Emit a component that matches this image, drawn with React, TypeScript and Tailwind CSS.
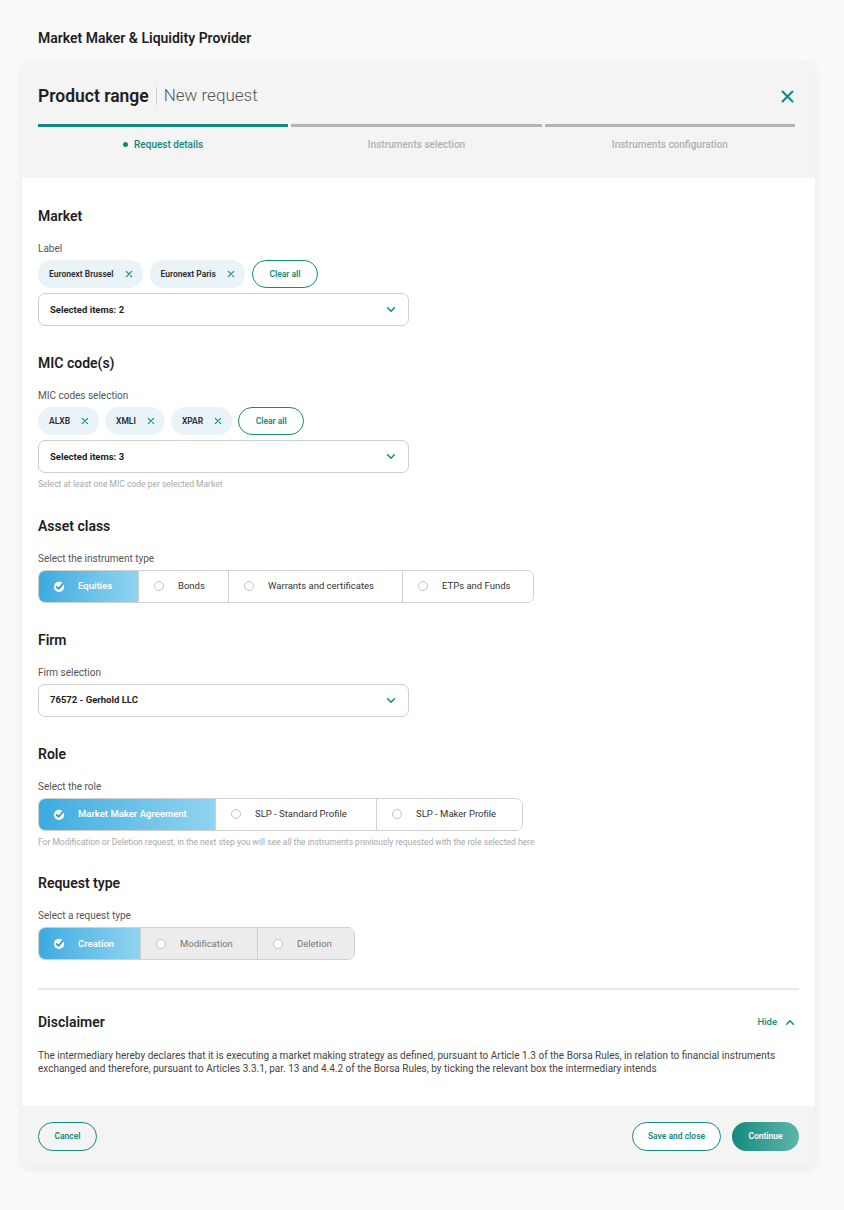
import type { ReactNode } from "react";

const TEAL = "text-[#0f8a7e]";

function XIcon({ className = "" }: { className?: string }) {
  return (
    <svg viewBox="0 0 12 12" className={className} fill="none" stroke="currentColor" strokeWidth="1.6" strokeLinecap="round">
      <path d="M2 2l8 8M10 2l-8 8" />
    </svg>
  );
}

function Chevron({ up = false }: { up?: boolean }) {
  return (
    <svg viewBox="0 0 12 8" className={`h-[7px] w-[10px] ${TEAL}`} fill="none" stroke="currentColor" strokeWidth="1.8" strokeLinecap="round" strokeLinejoin="round">
      <path d={up ? "M2 6l4-4 4 4" : "M2 2l4 4 4-4"} />
    </svg>
  );
}

function CheckBadge() {
  return (
    <svg viewBox="0 0 14 14" className="h-[13px] w-[13px]">
      <circle cx="6.5" cy="7.5" r="5.5" fill="white" />
      <path d="M3.8 7.4l2.1 2.1 4.6-5.4" fill="none" stroke="#2f9fd6" strokeWidth="1.9" strokeLinecap="round" strokeLinejoin="round" />
    </svg>
  );
}

function Radio() {
  return <span className="h-[10px] w-[10px] rounded-full border border-[#c4c4c4] bg-white" />;
}

function Section({ title, label, children, helper }: { title: string; label: string; children: ReactNode; helper?: string }) {
  return (
    <section className="flex flex-col">
      <h2 className="text-[14px] font-semibold leading-none text-[#1e1e24]">{title}</h2>
      <p className="mt-[21px] text-[10px] leading-none text-[#555]">{label}</p>
      <div className="mt-[6px] flex flex-col gap-[5px]">{children}</div>
      {helper && <p className="mt-[7px] text-[8.5px] leading-none text-[#a8a8a8]">{helper}</p>}
    </section>
  );
}

function Chip({ text }: { text: string }) {
  return (
    <span className="flex h-[28px] items-center gap-[11px] rounded-full bg-[#eaf3f8] pl-[11px] pr-[10px] text-[8.5px] font-semibold text-[#2a2a30]">
      {text}
      <XIcon className={`h-[8px] w-[8px] ${TEAL}`} />
    </span>
  );
}

function ClearAll() {
  return (
    <button className="flex h-[28px] w-[66px] items-center justify-center rounded-full border-[1.5px] border-[#138a7e] text-[8.5px] font-semibold text-[#138a7e]">
      Clear all
    </button>
  );
}

function Select({ value }: { value: string }) {
  return (
    <div className="flex h-[33px] w-[371px] items-center justify-between rounded-[7px] border border-[#cfcfcf] pl-[11px] pr-[12px]">
      <span className="text-[9.5px] font-bold text-[#1e1e24]">{value}</span>
      <Chevron />
    </div>
  );
}

function Segmented({ items, widths, disabled = false }: { items: string[]; widths: number[]; disabled?: boolean }) {
  return (
    <div className="flex h-[33px] w-fit overflow-hidden rounded-[7px] border border-[#d0d0d0]">
      {items.map((item, i) =>
        i === 0 ? (
          <div
            key={item}
            style={{ width: widths[i] }}
            className="flex items-center gap-[12px] bg-gradient-to-r from-[#3aabe0] to-[#8fd4f0] pl-[14px] text-[9.5px] font-semibold text-white"
          >
            <CheckBadge />
            {item}
          </div>
        ) : (
          <div
            key={item}
            style={{ width: widths[i] }}
            className={`flex items-center gap-[14px] border-l border-[#d0d0d0] pl-[15px] text-[9.5px] ${disabled ? "bg-[#ececec] text-[#777]" : "bg-white text-[#333]"}`}
          >
            <Radio />
            {item}
          </div>
        ),
      )}
    </div>
  );
}

export default function App() {
  return (
    <div className="min-h-[1210px] bg-[#fafafa] px-[22px] pt-[31px] text-[#1e1e24] [font-family:Roboto,'Noto_Sans',sans-serif]">
      <h1 className="pl-[16px] text-[14px] font-semibold leading-none">Market Maker &amp; Liquidity Provider</h1>

      <div className="mt-[17px] w-[793px] overflow-hidden rounded-[6px] bg-white shadow-[0_2px_8px_rgba(0,0,0,0.08)]">
        {/* header */}
        <div className="bg-[#f4f4f4] px-[16px] pb-[26px] pt-[21px]">
          <div className="flex items-center justify-between pr-[4px]">
            <div className="flex items-center">
              <span className="text-[17.5px] font-semibold">Product range</span>
              <span className="mx-[7px] h-[18px] w-px bg-[#cfcfcf]" />
              <span className="text-[17px] font-light text-[#555]">New request</span>
            </div>
            <XIcon className={`h-[15px] w-[15px] ${TEAL}`} />
          </div>
          <div className="mt-[15px] grid grid-cols-3 gap-[3px] pr-[4px]">
            {[
              ["Request details", true],
              ["Instruments selection", false],
              ["Instruments configuration", false],
            ].map(([label, active]) => (
              <div key={label as string} className="flex flex-col items-center">
                <div className={`h-[3px] w-full ${active ? "bg-[#0f8a7e]" : "bg-[#b5b5b5]"}`} />
                <div className={`mt-[10px] flex items-center gap-[6px] text-[10px] font-medium ${active ? "text-[#0f8a7e]" : "text-[#b0b0b0]"}`}>
                  {active && <span className="h-[5px] w-[5px] rounded-full bg-[#0f8a7e]" />}
                  {label as string}
                </div>
              </div>
            ))}
          </div>
        </div>

        {/* body */}
        <div className="px-[16px] pb-[31px] pt-[31px]">
          <div className="flex flex-col gap-[30px]">
            <Section title="Market" label="Label">
              <div className="flex gap-[7px]">
                <Chip text="Euronext Brussel" />
                <Chip text="Euronext Paris" />
                <ClearAll />
              </div>
              <Select value="Selected items: 2" />
            </Section>

            <Section title="MIC code(s)" label="MIC codes selection" helper="Select at least one MIC code per selected Market">
              <div className="flex gap-[6px]">
                <Chip text="ALXB" />
                <Chip text="XMLI" />
                <Chip text="XPAR" />
                <ClearAll />
              </div>
              <Select value="Selected items: 3" />
            </Section>

            <Section title="Asset class" label="Select the instrument type">
              <Segmented items={["Equities", "Bonds", "Warrants and certificates", "ETPs and Funds"]} widths={[99, 90, 174, 131]} />
            </Section>

            <Section title="Firm" label="Firm selection">
              <Select value="76572 - Gerhold LLC" />
            </Section>

            <Section
              title="Role"
              label="Select the role"
              helper="For Modification or Deletion request, in the next step you will see all the instruments previously requested with the role selected here"
            >
              <Segmented items={["Market Maker Agreement", "SLP - Standard Profile", "SLP - Maker Profile"]} widths={[176, 161, 146]} />
            </Section>

            <Section title="Request type" label="Select a request type">
              <Segmented items={["Creation", "Modification", "Deletion"]} widths={[101, 117, 97]} disabled />
            </Section>
          </div>

          <div className="mt-[28px] border-t-2 border-[#e9e9e9] pt-[25px]">
            <div className="flex items-center justify-between pr-[4px]">
              <h2 className="text-[14px] font-semibold leading-none">Disclaimer</h2>
              <button className={`flex items-center gap-[8px] text-[9.5px] font-medium ${TEAL}`}>
                Hide
                <Chevron up />
              </button>
            </div>
            <p className="mt-[19px] text-[10px] leading-[13px] text-[#444]">
              The intermediary hereby declares that it is executing a market making strategy as defined, pursuant to Article 1.3 of the Borsa Rules, in relation to financial instruments exchanged and therefore, pursuant to Articles 3.3.1, par. 13 and 4.4.2 of the Borsa Rules, by ticking the relevant box the intermediary intends
            </p>
          </div>
        </div>

        {/* footer */}
        <div className="flex items-center justify-between bg-[#f4f4f4] px-[16px] py-[16px]">
          <button className="flex h-[29px] w-[59px] items-center justify-center rounded-full border-[1.5px] border-[#138a7e] text-[8.5px] font-semibold text-[#138a7e]">
            Cancel
          </button>
          <div className="flex gap-[11px]">
            <button className="flex h-[29px] w-[89px] items-center justify-center rounded-full border-[1.5px] border-[#138a7e] bg-white text-[8.5px] font-semibold text-[#138a7e]">
              Save and close
            </button>
            <button className="flex h-[29px] w-[67px] items-center justify-center rounded-full bg-gradient-to-r from-[#0f8a7e] to-[#5bb6ab] text-[8.5px] font-semibold text-white">
              Continue
            </button>
          </div>
        </div>
      </div>
    </div>
  );
}
